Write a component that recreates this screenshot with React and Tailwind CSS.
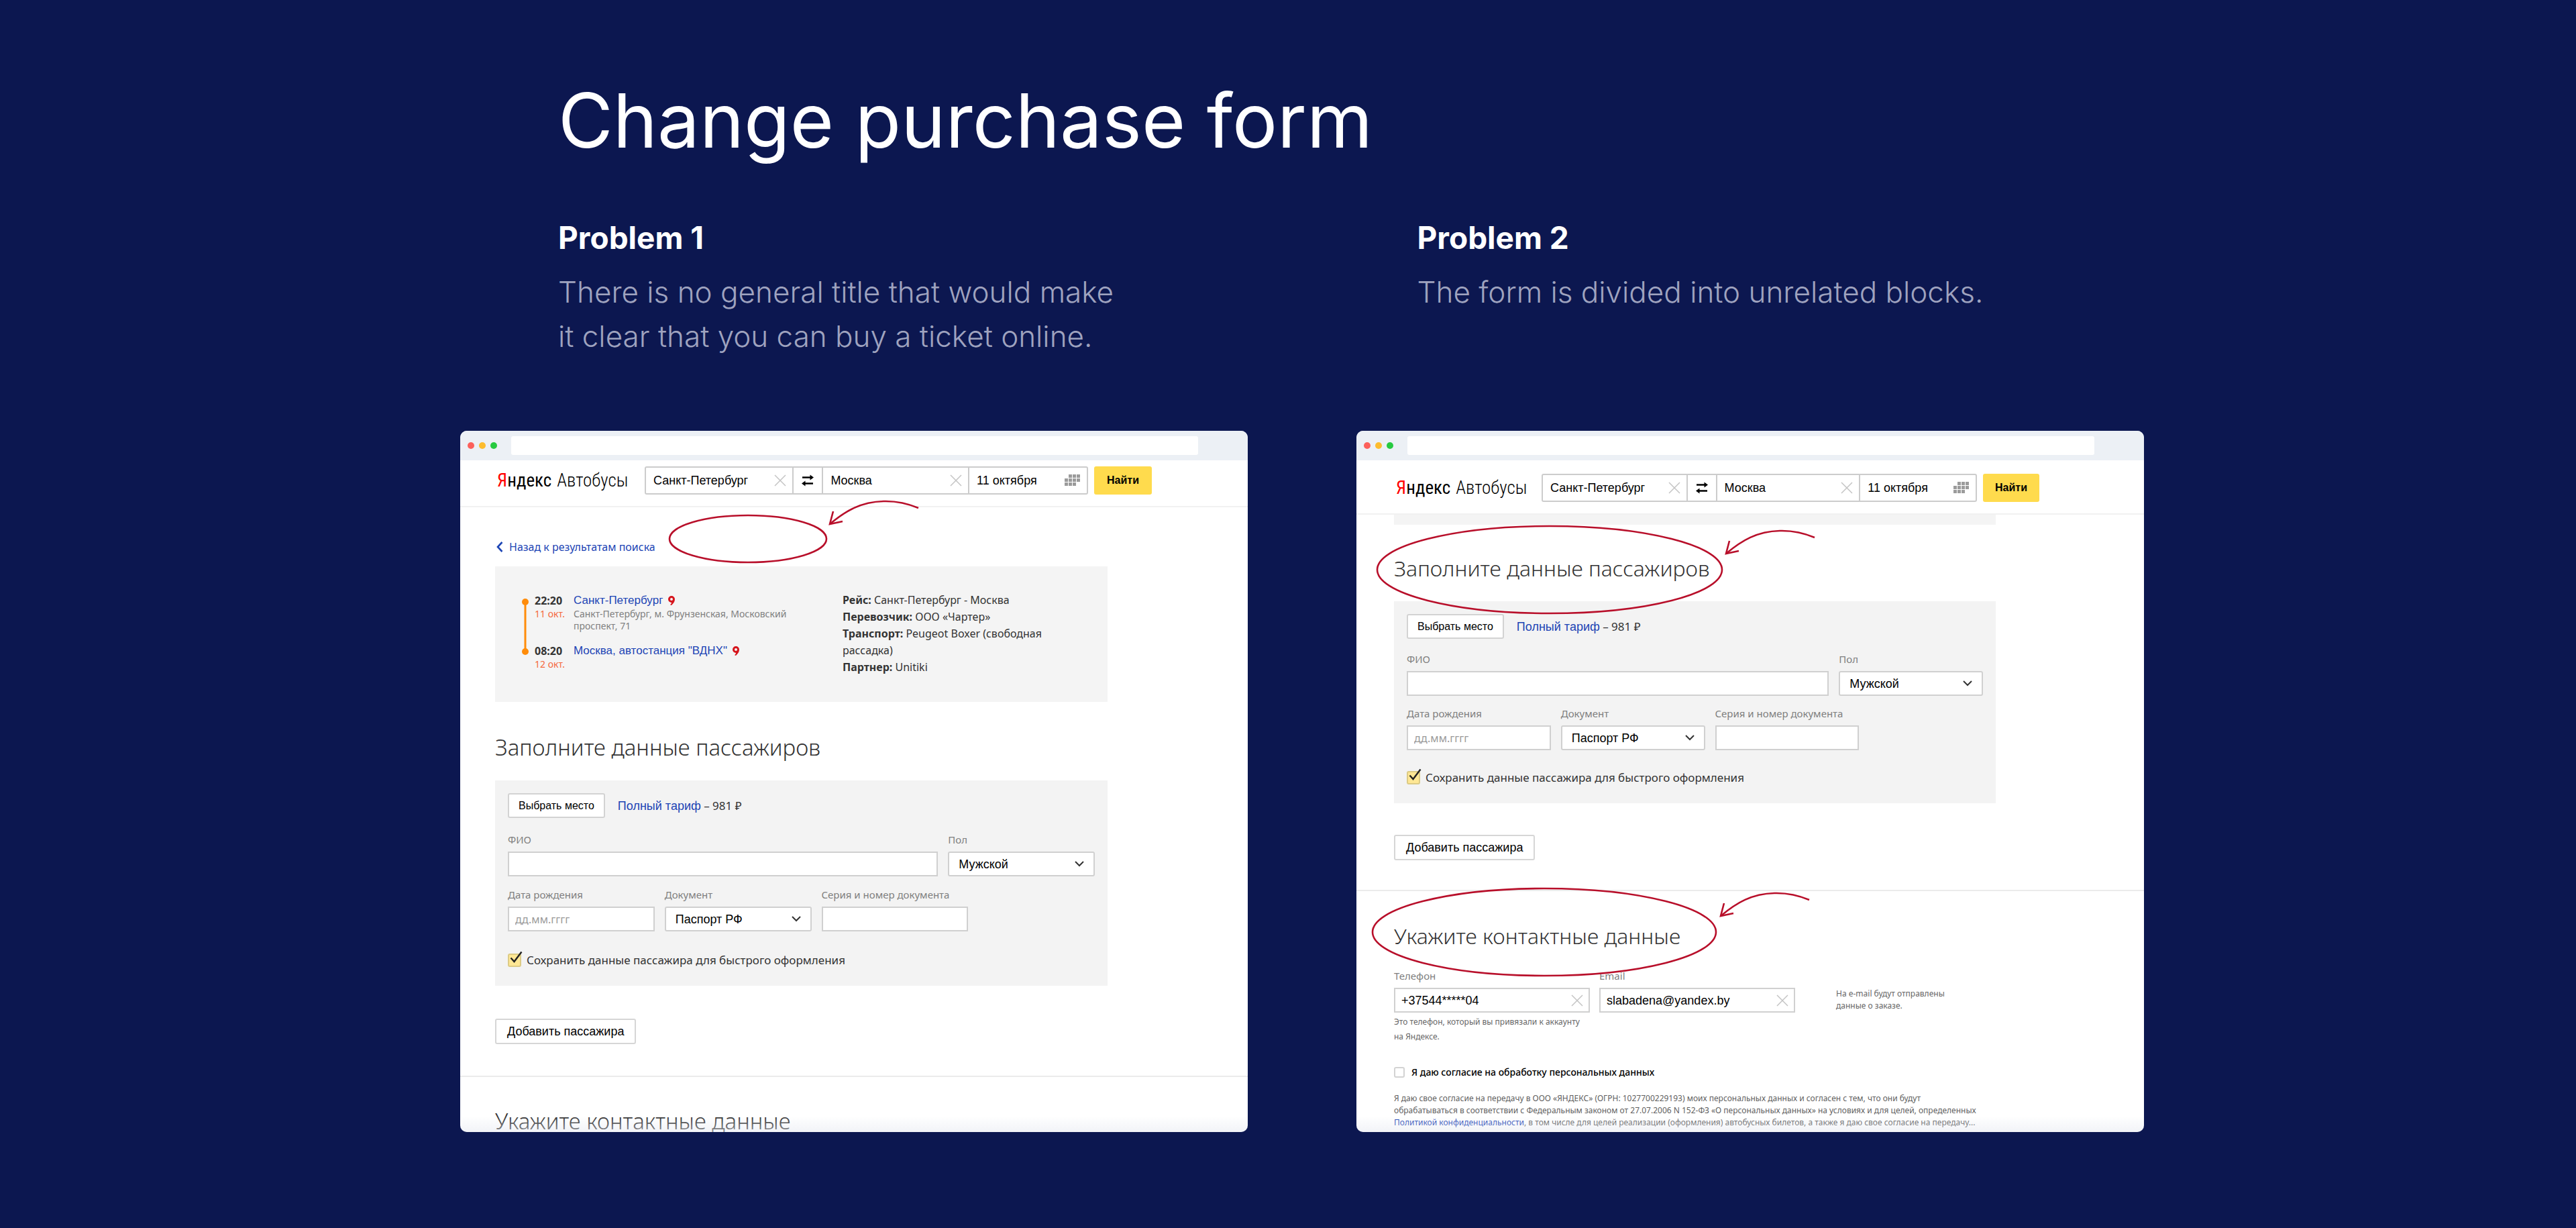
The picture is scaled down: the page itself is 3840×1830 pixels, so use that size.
import React, { useId } from "react";

const NOTO = "font-['Noto_Sans','Open_Sans',sans-serif]";
const ARIAL = "font-['Liberation_Sans',Arial,sans-serif]";

function CrossIcon() {
  return (
    <svg viewBox="0 0 18 18" className="h-[18px] w-[18px] shrink-0" fill="none" stroke="#c4c4c4" strokeWidth="1.5">
      <path d="M1 1 L17 17 M17 1 L1 17" />
    </svg>
  );
}

function ArrowsIcon() {
  return (
    <svg viewBox="0 0 18 20" className="h-5 w-[18px]" fill="none" stroke="#000" strokeWidth="2.6">
      <path d="M1 5.5 H15" />
      <path d="M3 14.5 H17" />
      <path d="M12.5 1.5 L18 5.5 L12.5 9.5 Z M5.5 10.5 L0 14.5 L5.5 18.5 Z" fill="#000" stroke="none" />
    </svg>
  );
}

const CALENDAR_CELLS = [
  [1, 0], [2, 0], [3, 0],
  [0, 1], [1, 1], [2, 1], [3, 1],
  [0, 2], [1, 2], [2, 2],
];

function CalendarIcon() {
  return (
    <svg viewBox="0 0 24 18" className="h-[18px] w-6 shrink-0" fill="#9b9b9b">
      {CALENDAR_CELLS.map(([c, r]) => (
        <rect key={`${c}-${r}`} x={c * 6} y={r * 6} width="5" height="5" />
      ))}
    </svg>
  );
}

function PinIcon() {
  return (
    <svg viewBox="0 0 10 14" className="h-[14px] w-[10px] shrink-0">
      <path d="M5 0 A5 5 0 0 1 10 5 C10 8.5 8 11 5 14 L3 13.200 C4.500 11.800 5 11 5 10 A5 5 0 0 1 5 0 Z" fill="#d6151c" />
      <circle cx="5" cy="5" r="2" fill="#f4f4f4" />
    </svg>
  );
}

function Chrome() {
  return (
    <div className="flex h-11 items-center bg-[#ecf0f5] pl-[11px] pr-[74px]">
      <div className="flex w-[65px] gap-[7px]">
        <span className="h-[10px] w-[10px] rounded-full bg-[#fc605b]" />
        <span className="h-[10px] w-[10px] rounded-full bg-[#fdbc2e]" />
        <span className="h-[10px] w-[10px] rounded-full bg-[#27ca40]" />
      </div>
      <div className="h-7 flex-1 rounded-[3px] bg-white" />
    </div>
  );
}

function SearchField({ label, value, icon }) {
  return (
    <div className="flex min-w-0 items-center justify-between gap-2 border-l-2 border-[#cccccc] pl-[11px] pr-[9px] first:border-l-0">
      <input
        aria-label={label}
        defaultValue={value}
        className="w-full min-w-0 bg-transparent text-[18px] leading-6 text-black outline-none"
      />
      {icon}
    </div>
  );
}

function SiteHeader({ second }) {
  return (
    <header
      className={
        second
          ? "flex h-[81px] items-start border-b-2 border-[#f1f1f1] pl-[56px] pr-[156px] pt-5"
          : "flex h-[70px] items-start border-b-2 border-[#f1f1f1] pl-[52px] pr-[143px] pt-[9px]"
      }
    >
      <a
        href="#"
        className={
          "flex h-[42px] shrink-0 items-center gap-2 pl-[3px] font-['Roboto_Condensed',Roboto,sans-serif] text-[27px] leading-none text-black " +
          (second ? "w-[220px]" : "w-[223px]")
        }
      >
        <span>
          <span className="text-[#f00]">Я</span>ндекс
        </span>
        <span className="font-light">Автобусы</span>
      </a>
      <form className={`flex h-[42px] flex-1 gap-[9px] ${ARIAL}`} onSubmit={(e) => e.preventDefault()}>
        <div className="grid flex-1 grid-cols-[219fr_45fr_219fr_178fr] rounded-[3px] border-2 border-[#cccccc] bg-white">
          <SearchField label="Откуда" value="Санкт-Петербург" icon={<CrossIcon />} />
          <button type="button" aria-label="Поменять местами" className="flex items-center justify-center border-l-2 border-[#cccccc]">
            <ArrowsIcon />
          </button>
          <SearchField label="Куда" value="Москва" icon={<CrossIcon />} />
          <SearchField label="Дата" value="11 октября" icon={<CalendarIcon />} />
        </div>
        <button type="submit" className={"rounded-[3px] bg-[#ffdb4d] text-[16px] font-bold text-black " + (second ? "w-[84px]" : "w-[86px]")}>
          Найти
        </button>
      </form>
    </header>
  );
}

function Field({ label, placeholder, value, className, clearable }) {
  const id = useId();
  return (
    <div className={`flex flex-col gap-2 ${className}`}>
      <label htmlFor={id} className="whitespace-nowrap text-[15px] leading-5 text-[#7f7f7f]">
        {label}
      </label>
      <div className="flex h-[37px] items-center border-2 border-[#d0d0d0] bg-white pl-[9px] pr-[8px]">
        <input
          id={id}
          defaultValue={value}
          placeholder={placeholder}
          className={
            "w-full min-w-0 bg-transparent leading-6 text-black outline-none placeholder:text-[#9a9a9a] " +
            (value ? "text-[18px] font-['Liberation_Sans',Arial,sans-serif]" : "text-[16px]")
          }
        />
        {clearable && <CrossIcon />}
      </div>
    </div>
  );
}

function SelectField({ label, value, className }) {
  const id = useId();
  return (
    <div className={`flex flex-col gap-2 ${className}`}>
      <label htmlFor={id} className="text-[15px] leading-5 text-[#7f7f7f]">
        {label}
      </label>
      <div className="relative">
        <select
          id={id}
          defaultValue={value}
          className={`h-[37px] w-full appearance-none rounded-[3px] border-2 border-[#d0d0d0] bg-white pl-[14px] text-[18px] leading-6 text-black ${ARIAL}`}
        >
          <option>{value}</option>
        </select>
        <svg viewBox="0 0 14 9" className="pointer-events-none absolute right-4 top-[14px] h-[9px] w-[14px]" fill="none" stroke="#333" strokeWidth="2">
          <path d="M1 1 L7 7 L13 1" />
        </svg>
      </div>
    </div>
  );
}

function PassengerCard({ second }) {
  return (
    <section className="bg-[#f3f3f3] px-[19px] pb-[26px] pt-[19px]">
      <div className="flex h-[37px] items-center gap-[19px]">
        <button type="button" className={`h-[37px] rounded-[3px] border-2 border-[#d3d3d3] bg-white px-[14px] text-[16px] text-black ${ARIAL}`}>
          Выбрать место
        </button>
        <p className="text-[17px] leading-6 text-[#333]">
          <a href="#" className="text-[18px] text-[#1d45b5] font-['Liberation_Sans',Arial,sans-serif]">
            Полный тариф
          </a>{" "}
          – 981 ₽
        </p>
      </div>
      <div className={second ? "mt-5 flex gap-[15px]" : "mt-[22px] flex gap-[15px]"}>
        <Field label="ФИО" className="flex-1" />
        <SelectField label="Пол" value="Мужской" className="w-1/4" />
      </div>
      <div className={second ? "mt-4 flex gap-[15px]" : "mt-[17px] flex gap-[15px]"}>
        <Field label="Дата рождения" placeholder="дд.мм.гггг" className="w-1/4" />
        <SelectField label="Документ" value="Паспорт РФ" className="w-1/4" />
        <Field label="Серия и номер документа" className="w-1/4" />
      </div>
      <label className={"flex items-center gap-2 text-[17px] leading-6 text-[#333] " + (second ? "mt-[29px]" : "mt-[31px]")}>
        <span className="relative h-5 w-5 shrink-0">
          <input type="checkbox" defaultChecked className="block h-5 w-5 appearance-none rounded-[3px] border-2 border-[#dccb85] bg-[#ffe794]" />
          <svg viewBox="0 0 24 24" className="pointer-events-none absolute -top-1 left-0 h-6 w-6" fill="none" stroke="#222" strokeWidth="2.4">
            <path d="M4.5 10.5 L9.5 16 L20.5 1.5" />
          </svg>
        </span>
        Сохранить данные пассажира для быстрого оформления
      </label>
    </section>
  );
}

function AddPassenger() {
  return (
    <button type="button" className={`h-[38px] rounded-[3px] border-2 border-[#d6d6d6] bg-white px-4 text-[18px] text-black ${ARIAL}`}>
      Добавить пассажира
    </button>
  );
}

function Stop({ time, date, place, children }) {
  return (
    <div className="grid min-h-[58px] grid-cols-[58px_1fr] content-start">
      <span className="text-[16px] font-bold leading-[22px] text-[#333]">{time}</span>
      <span className="flex items-center gap-2 leading-[22px]">
        <a href="#" className={`text-[17px] text-[#1d45b5] ${ARIAL}`}>
          {place}
        </a>
        <PinIcon />
      </span>
      <span className="text-[14px] leading-[18px] text-[#f4683c]">{date}</span>
      <span className="text-[14px] leading-[18px] text-[#808080]">{children}</span>
    </div>
  );
}

function TripCard() {
  return (
    <section className="flex h-[202px] items-start bg-[#f4f4f4] pl-[39px] pr-[60px] pt-[38px]">
      <svg viewBox="0 0 12 86" className="mt-[9px] h-[86px] w-3 shrink-0" fill="#ff8c0a">
        <rect x="4.5" y="6" width="3" height="74" />
        <circle cx="6" cy="6" r="5" />
        <circle cx="6" cy="80" r="5" />
      </svg>
      <div className="ml-2 mt-[2px] flex w-[459px] shrink-0 flex-col gap-[17px]">
        <Stop time="22:20" date="11 окт." place="Санкт-Петербург">
          Санкт-Петербург, м. Фрунзенская, Московский
          <br />
          проспект, 71
        </Stop>
        <Stop time="08:20" date="12 окт." place={'Москва, автостанция "ВДНХ"'} />
      </div>
      <div className="text-[16px] leading-[25px] text-[#333]">
        <p><b>Рейс:</b> Санкт-Петербург - Москва</p>
        <p><b>Перевозчик:</b> ООО «Чартер»</p>
        <p><b>Транспорт:</b> Peugeot Boxer (свободная<br />рассадка)</p>
        <p><b>Партнер:</b> Unitiki</p>
      </div>
    </section>
  );
}

function Browser({ children, marks }) {
  return (
    <article className={`relative aspect-[1174/1045] overflow-hidden rounded-[10px] bg-white ${NOTO}`}>
      <Chrome />
      {children}
      <div className="pointer-events-none absolute inset-x-0 bottom-0 h-6 bg-linear-to-b from-[#e4e7f0]/0 to-[#e4e7f0]/50" />
      <svg viewBox="0 0 1174 1045" className="pointer-events-none absolute inset-0 h-full w-full" fill="none" stroke="#b80f2a" strokeWidth="2.6">
        {marks}
      </svg>
    </article>
  );
}

function Arrow({ x, y }) {
  return (
    <g transform={`translate(${x} ${y})`}>
      <path d="M0 0 C24 -20 46 -33 80 -34 C97 -34.500 113 -32 132 -24" />
      <path d="M5 -19 L0 0 L19 -4" />
    </g>
  );
}

function FirstWindow() {
  return (
    <Browser
      marks={
        <>
          <ellipse cx="429" cy="161" rx="117" ry="35" />
          <Arrow x={551} y={139} />
        </>
      }
    >
      <SiteHeader />
      <div className="pl-[52px] pr-[209px]">
        <a href="#" className="mt-[47px] flex items-center gap-[9px] text-[16px] leading-6 text-[#1d45b5]">
          <svg viewBox="0 0 10 16" className="ml-[2px] h-4 w-[10px]" fill="none" stroke="#1d45b5" strokeWidth="2.6">
            <path d="M8.500 1 L2 8 L8.500 15" />
          </svg>
          Назад к результатам поиска
        </a>
        <div className="mt-[17px]">
          <TripCard />
        </div>
        <h3 className="mb-[29px] mt-[48px] text-[33px] font-light leading-10 text-[#333]">Заполните данные пассажиров</h3>
        <PassengerCard />
        <div className="mt-[49px]">
          <AddPassenger />
        </div>
      </div>
      <hr className="mt-[47px] border-t-2 border-[#ebebeb]" />
      <h3 className="mt-[46px] pl-[52px] text-[33px] font-light leading-10 text-[#333]">Укажите контактные данные</h3>
    </Browser>
  );
}

function SecondWindow() {
  return (
    <Browser
      marks={
        <>
          <ellipse cx="288" cy="207" rx="257" ry="65" />
          <Arrow x={551} y={183} />
          <ellipse cx="280" cy="747" rx="256" ry="65" />
          <Arrow x={543} y={723} />
        </>
      }
    >
      <SiteHeader second />
      <div className="pl-[56px] pr-[221px]">
        <div className="h-[15px] bg-[#f4f4f4]" />
        <h3 className="mb-[29px] mt-[45px] text-[32px] font-light leading-10 text-[#333]">Заполните данные пассажиров</h3>
        <PassengerCard second />
        <div className="mt-[47px]">
          <AddPassenger />
        </div>
      </div>
      <hr className="mt-[44px] border-t-2 border-[#ebebeb]" />
      <div className="pl-[56px] pr-[221px]">
        <h3 className="mb-[29px] mt-[47px] text-[32px] font-light leading-10 text-[#333]">Укажите контактные данные</h3>
        <div className="flex items-start gap-[14px]">
          <div className="w-[292px]">
            <Field label="Телефон" value="+37544*****04" clearable />
            <p className="mt-[3px] text-[12px] leading-[22px] text-[#666]">
              Это телефон, который вы привязали к аккаунту
              <br />
              на Яндексе.
            </p>
          </div>
          <Field label="Email" value="slabadena@yandex.by" clearable className="w-[292px]" />
          <p className="ml-[47px] mt-7 text-[12px] leading-[18px] text-[#666]">
            На e-mail будут отправлены
            <br />
            данные о заказе.
          </p>
        </div>
        <label className="mt-8 flex items-center gap-[10px] text-[14px] font-medium leading-5 text-black">
          <input type="checkbox" className="h-4 w-4 appearance-none rounded-[3px] border-2 border-[#d3d3d3] bg-white" />
          Я даю согласие на обработку персональных данных
        </label>
        <p className="mt-5 whitespace-nowrap text-[12px] leading-[18px] text-[#5f5f5f]">
          Я даю свое согласие на передачу в ООО «ЯНДЕКС» (ОГРН: 1027700229193) моих персональных данных и согласен с тем, что они будут
          <br />
          обрабатываться в соответствии с Федеральным законом от 27.07.2006 N 152-ФЗ «О персональных данных» на условиях и для целей, определенных
          <br />
          <a href="#" className="text-[#1d45b5]">Политикой конфиденциальности</a>, в том числе для целей реализации (оформления) автобусных билетов, а также я даю свое согласие на передачу...
        </p>
      </div>
    </Browser>
  );
}

export default function App() {
  return (
    <main className="min-h-screen bg-[#0c1750] pb-[143px] pl-[42px] pt-[113px] font-['Inter',sans-serif]">
      <div className="mx-auto w-full max-w-[2510px]">
        <header className="pl-[146px]">
          <h1 className="text-[112px] leading-[132px] text-white">Change purchase form</h1>
          <div className="mt-[79px] grid grid-cols-[13fr_11fr]">
            <section>
              <h2 className="text-[46px] font-bold leading-[60px] text-white">Problem 1</h2>
              <p className="mt-[18px] text-[44px] font-light leading-[66px] text-[#9fa3bf]">
                There is no general title that would make
                <br />
                it clear that you can buy a ticket online.
              </p>
            </section>
            <section>
              <h2 className="text-[46px] font-bold leading-[60px] text-white">Problem 2</h2>
              <p className="mt-[18px] text-[44px] font-light leading-[66px] text-[#9fa3bf]">The form is divided into unrelated blocks.</p>
            </section>
          </div>
        </header>
        <div className="mt-[108px] grid grid-cols-2 gap-[162px]">
          <FirstWindow />
          <SecondWindow />
        </div>
      </div>
    </main>
  );
}
